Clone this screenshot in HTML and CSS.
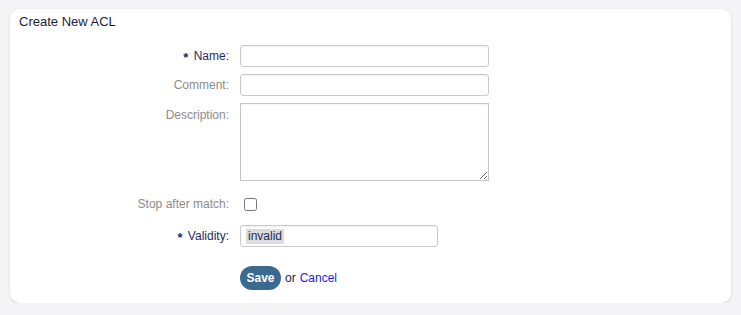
FILE: index.html
```html
<!DOCTYPE html>
<html>
<head>
<meta charset="utf-8">
<link rel="stylesheet" href="styles.css">
</head>
<body>
<div class="card">
  <h2 class="title">Create New ACL</h2>
  <form class="form">
    <div class="row r-name">
      <label class="label req"><span class="star">*</span> Name:</label>
      <input class="field" type="text">
    </div>
    <div class="row r-comment">
      <label class="label">Comment:</label>
      <input class="field" type="text">
    </div>
    <div class="row r-desc">
      <label class="label label-top">Description:</label>
      <textarea class="field area"></textarea>
    </div>
    <div class="row r-stop">
      <label class="label">Stop after match:</label>
      <div class="checkwrap"><input class="check" type="checkbox"></div>
    </div>
    <div class="row r-valid">
      <label class="label req"><span class="star">*</span> Validity:</label>
      <div class="field select"><span class="chip">invalid</span></div>
    </div>
    <div class="row r-actions">
      <span class="label"></span>
      <div class="actions">
        <button type="button" class="btn">Save</button>
        <span class="or">or</span>
        <a class="cancel" href="#">Cancel</a>
      </div>
    </div>
  </form>
</div>
</body>
</html>
```

FILE: styles.css
```css
html, body {
  margin: 0;
  padding: 0;
  background: #f4f4f6;
  font-family: "Liberation Sans", Arial, sans-serif;
}
.card {
  margin: 9px 10px 0 10px;
  height: 294px;
  box-sizing: border-box;
  background: #fff;
  border-radius: 10px;
  box-shadow: 0 1px 3px rgba(0, 0, 0, 0.13);
  padding: 4px 0 0 0;
}
.title {
  margin: 0 0 0 9px;
  font-size: 13px;
  line-height: 17px;
  font-weight: normal;
  color: #1c1c3c;
}
.form {
  display: flex;
  flex-direction: column;
  margin: 0;
}
.row {
  display: grid;
  grid-template-columns: 219px 1fr;
  column-gap: 11px;
  align-items: start;
}
.r-name { margin-top: 15px; }
.r-comment { margin-top: 7px; }
.r-desc { margin-top: 7px; }
.r-stop { margin-top: 12px; }
.r-valid { margin-top: 10px; }
.r-actions { margin-top: 19px; }
.label {
  text-align: right;
  font-size: 12px;
  line-height: 22px;
  color: #8b8b8b;
  white-space: nowrap;
}
.label-top { line-height: 22px; margin-top: 1px; }
.label.req { color: #1f2b5c; }
.star {
  display: inline-block;
  font-size: 13px;
  font-weight: bold;
  position: relative;
  top: 2px;
  margin-right: 2px;
}
.field {
  box-sizing: border-box;
  width: 249px;
  height: 22px;
  margin: 0;
  border: 1px solid #c9c9c9;
  border-radius: 3px;
  background: #fff;
  box-shadow: inset 0 1px 2px rgba(0, 0, 0, 0.06);
  font-family: "Liberation Sans", Arial, sans-serif;
  font-size: 12px;
  padding: 2px 4px;
  outline: none;
}
.area {
  height: 78px;
  resize: both;
  display: block;
  border-radius: 0;
  border-color: #c4c4c4;
}
.checkwrap {
  height: 22px;
  display: flex;
  align-items: center;
}
.check {
  width: 13px;
  height: 13px;
  margin: 0 0 0 4px;
}
.select {
  width: 198px;
  display: flex;
  align-items: center;
  padding: 0 5px;
}
.chip {
  background: #dcdcdc;
  color: #1f2b5c;
  font-size: 12px;
  line-height: 15px;
  padding: 0 2px;
}
.actions {
  display: flex;
  align-items: center;
  height: 24px;
  font-size: 12px;
}
.btn {
  background: #3b6a91;
  color: #fff;
  border: none;
  border-radius: 12px;
  width: 41px;
  height: 24px;
  padding: 0;
  font-family: "Liberation Sans", Arial, sans-serif;
  font-weight: bold;
  font-size: 12px;
}
.or {
  color: #1c1c3c;
  margin-left: 4px;
}
.cancel {
  color: #1a1aee;
  text-decoration: none;
  margin-left: 4px;
}
```
